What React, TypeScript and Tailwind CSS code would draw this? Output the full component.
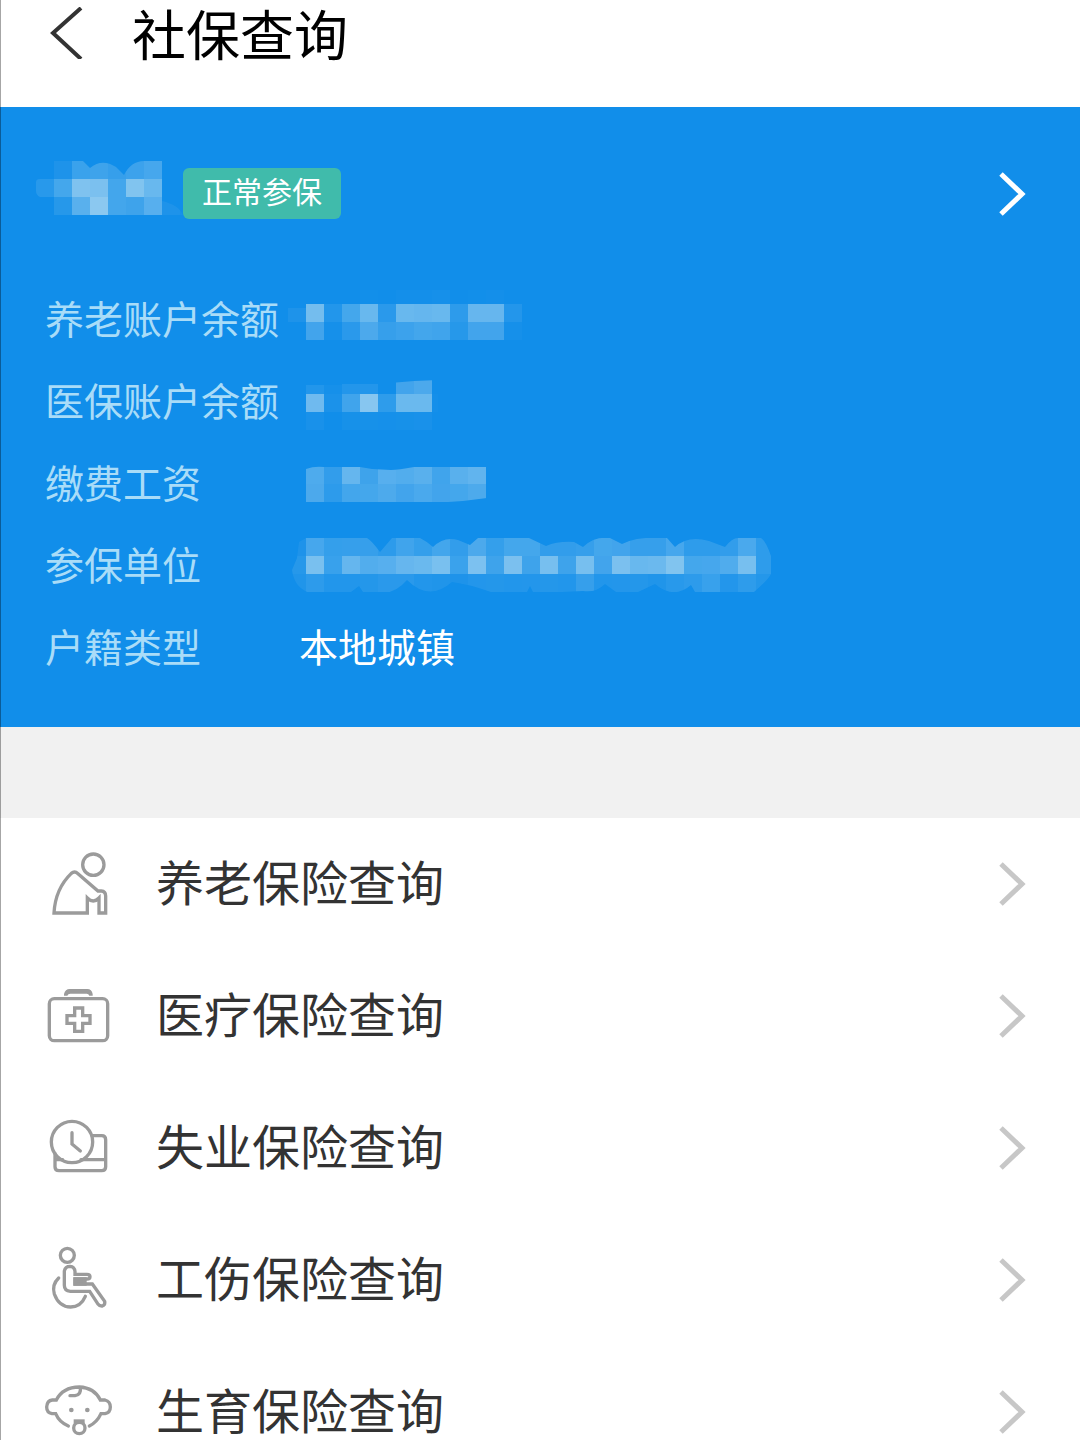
import type { ReactNode } from "react";

const CELL = 18;

type MosaicProps = {
  label: string;
  rows: number[][];
  x: number;
  y: number;
  width: number;
  height: number;
  className: string;
  outline?: string;
  id: string;
};

/* Pixelated cover for private values; each number is a cell's opacity in percent. */
function Mosaic({ label, rows, x, y, width, height, className, outline, id }: MosaicProps) {
  return (
    <svg role="img" aria-label={label} viewBox={`0 0 ${width} ${height}`} className={className} shapeRendering="crispEdges">
      {outline && (
        <clipPath id={id}>
          <path d={outline} />
        </clipPath>
      )}
      <g fill="#b9def2" clipPath={outline ? `url(#${id})` : undefined}>
        {rows.map((row, r) =>
          row.map((v, c) =>
            v > 0 ? (
              <rect key={`${r}-${c}`} x={x + c * CELL} y={y + r * CELL} width={CELL} height={CELL} opacity={v / 100} />
            ) : null,
          ),
        )}
      </g>
    </svg>
  );
}

function Chevron({ className }: { className: string }) {
  return (
    <svg viewBox="0 0 32 48" className={className} fill="none" stroke="currentColor" strokeWidth="5" aria-hidden="true">
      <path d="M3 4 L24 24 L3 44" />
    </svg>
  );
}

const fields: { label: string; value: ReactNode }[] = [
  {
    label: "养老账户余额",
    value: (
      <Mosaic
        id="pension"
        label="已隐藏"
        className="-ml-[11px] h-[82px] w-[504px]"
        width={504}
        height={82}
        x={0}
        y={8}
        outline="M18 12 H504 V82 H0 V58 Q-8 46 0 30 H18Z"
        rows={[
          [0, 0, 0, 0, 1, 0, 2, 2, 3, 0, 1, 2],
          [8, 59, 10, 31, 52, 15, 52, 50, 52, 17, 51, 51, 11],
          [0, 29, 3, 15, 35, 22, 26, 30, 28, 13, 29, 29, 3],
        ]}
      />
    ),
  },
  {
    label: "医保账户余额",
    value: (
      <Mosaic
        id="medical"
        label="已隐藏"
        className="-ml-[11px] h-[82px] w-[504px]"
        width={504}
        height={82}
        x={0}
        y={16}
        outline="M0 25 H54 V24 H90 V24 L126 21 L150 20 V82 H0Z"
        rows={[
          [0, 10, 3, 11, 11, 0, 29, 35],
          [0, 56, 6, 28, 70, 18, 53, 53, 2],
          [0, 5, 0, 4, 4, 3, 4, 5],
        ]}
      />
    ),
  },
  {
    label: "缴费工资",
    value: (
      <Mosaic
        id="wage"
        label="已隐藏"
        className="-ml-[11px] h-[82px] w-[504px]"
        width={504}
        height={82}
        x={0}
        y={24}
        outline="M18 27 Q26 24 36 25 H72 L84 27 L103 28 Q110 28 126 25 H199 V56 L175 59 L145 61 V60 H18Z"
        rows={[
          [0, 37, 20, 50, 27, 42, 39, 43, 28, 43, 48],
          [0, 35, 17, 30, 31, 36, 29, 34, 29, 31, 36],
        ]}
      />
    ),
  },
  {
    label: "参保单位",
    value: (
      <Mosaic
        id="company"
        label="已隐藏"
        className="-ml-[11px] h-[82px] w-[504px]"
        width={504}
        height={82}
        x={0}
        y={14}
        outline="M11 18 L18 14 H79 Q84 17 92 28 L104 14 H132 Q140 18 145 23 Q156 12 170 16 L182 21 L190 14 H241 L258 22 Q270 17 286 18 L295 23 Q306 12 322 14 L334 20 Q350 12 379 14 L387 23 Q400 11 421 17 L437 23 Q444 14 450 14 H473 Q478 17 483 32 V50 Q480 56 466 68 H407 L403 61 Q386 76 367 60 L350 68 H328 L317 60 Q308 69 295 67 L274 68 H245 L242 62 L239 68 H203 Q180 60 164 58 Q141 78 119 56 Q106 71 92 68 H75 L71 62 L63 68 H19 Q6 62 4 46 L9 34Z"
        rows={[
          [8, 32, 21, 22, 22, 17, 28, 21, 30, 20, 35, 21, 31, 31, 20, 20, 22, 31, 29, 22, 22, 32, 18, 18, 20, 34, 18],
          [13, 62, 24, 50, 39, 42, 51, 53, 62, 25, 64, 27, 63, 27, 61, 27, 61, 29, 63, 52, 54, 67, 31, 32, 38, 61, 18],
          [9, 17, 10, 10, 12, 15, 15, 10, 9, 8, 11, 12, 10, 11, 12, 10, 22, 10, 11, 12, 9, 14, 17, 24, 11, 18, 12],
        ]}
      />
    ),
  },
  { label: "户籍类型", value: "本地城镇" },
];

const services: { name: string; viewBox: string; icon: ReactNode }[] = [
  {
    name: "养老保险查询",
    viewBox: "36 24 216 216",
    icon: (
      <>
        <circle cx="190" cy="74" r="32" />
        <path d="M72 219 Q76 146 124 100 Q134 92 144 101 L204 153 H214 Q227 154 227 168 V219 H207 V174 Q190 192 172 174 V219Z" />
      </>
    ),
  },
  {
    name: "医疗保险查询",
    viewBox: "36 30 216 216",
    icon: (
      <>
        <rect x="58" y="86" width="175" height="126" rx="15" />
        <path d="M102 77 V72 Q106 57 119 57 H172 Q185 57 188 72 V77 H178 Q176 71 170 71 H121 Q114 71 112 77Z" fill="currentColor" stroke="none" />
        <path d="M134 114 H158 V137 H180 V160 H158 V184 H134 V160 H111 V137 H134Z" />
      </>
    ),
  },
  {
    name: "失业保险查询",
    viewBox: "36 36 216 216",
    icon: (
      <>
        <circle cx="126" cy="126" r="62" />
        <path d="M126 98 V132 L151 153" />
        <path d="M187 107 H215 Q227 107 227 119 V200 Q227 212 215 212 H87 Q75 212 75 200 V160 M75 179 H98 M153 179 H227" />
      </>
    ),
  },
  {
    name: "工伤保险查询",
    viewBox: "36 27 216 216",
    icon: (
      <>
        <circle cx="112" cy="61" r="21" />
        <path d="M103 108 Q106 94 120 94 Q134 95 135 110 V118 H171 Q180 118 180 125 Q180 132 171 132 H135 V147 H187 L224 199 Q226 210 217 213 Q209 214 203 206 L179 169 H121 Q103 168 103 151Z" />
        <path d="M135 132 H165 V147 H135Z" fill="currentColor" />
        <path d="M86 129 Q65 149 73 177 Q87 216 122 216 Q153 215 166 184" />
      </>
    ),
  },
  {
    name: "生育保险查询",
    viewBox: "36 18 216 216",
    icon: (
      <>
        <path d="M115 168 Q88 157 77 131 H66 Q50 128 50 111 Q51 92 67 90 H79 Q98 52 148 51 Q193 53 211 90 H225 Q241 94 241 111 Q241 128 225 131 H213 Q201 157 178 168" />
        <path d="M151 53 Q154 74 135 77 L120 77" />
        <circle cx="124" cy="120" r="7" fill="currentColor" stroke="none" />
        <circle cx="172" cy="120" r="7" fill="currentColor" stroke="none" />
        <circle cx="148" cy="174" r="17" />
        <path d="M131 148 H164 V160 H131Z" fill="currentColor" stroke="none" />
      </>
    ),
  },
];

export default function App() {
  return (
    <main className="relative h-screen overflow-hidden bg-white font-['Noto_Sans_CJK_SC',sans-serif]">
      <div className="pointer-events-none absolute inset-y-0 left-0 z-10 w-px bg-black/35" />

      <header className="flex items-center pb-[41px] pl-12 text-black">
        <button type="button" aria-label="返回" className="flex w-[84px] items-center text-[#333333]">
          <svg viewBox="0 0 36 52" className="h-[52px] w-9" fill="none" stroke="currentColor" strokeWidth="4" aria-hidden="true">
            <path d="M33 1 L5 26 L33 52" />
          </svg>
        </button>
        <h1 className="text-[54px] leading-[66px]">社保查询</h1>
      </header>

      <section className="bg-[#118eea] pt-[61px] pb-[39px]">
        <a href="#account" aria-label="账户详情" className="flex h-[51px] items-center pr-[50px] pl-9">
          <Mosaic
            id="name"
            label="姓名已隐藏"
            className="h-[70px] w-[147px]"
            width={147}
            height={70}
            x={0}
            y={2}
            outline="M0 23 Q0 20 4 20 H18 V2 H47 L54 9 Q66 -1 80 8 L88 16 Q95 2 108 2 H126 V42 Q143 46 147 56 H18 V38 H4 Q0 36 0 32Z"
            rows={[
              [0, 8, 25, 27, 22, 26, 32],
              [14, 31, 66, 63, 30, 67, 52],
              [0, 13, 43, 73, 30, 27, 42, 8, 5],
            ]}
          />
          <span className="flex h-[51px] items-center rounded-md bg-[#40bbab] px-[19px] pb-1.5 text-[30px] leading-[45px] text-white">
            正常参保
          </span>
          <Chevron className="ml-auto h-12 w-8 text-white" />
        </a>

        <dl className="mt-[59px] pl-[45px] text-[39px] leading-[78px]">
          {fields.map((f) => (
            <div key={f.label} className="flex h-[82px]">
              <dt className="w-[254px] shrink-0 text-[#a9dcf8]">{f.label}</dt>
              <dd className="text-white">{f.value}</dd>
            </div>
          ))}
        </dl>
      </section>

      <div className="h-[91px] bg-[#f1f1f1]" />

      <nav aria-label="保险查询">
        <ul>
          {services.map((s) => (
            <li key={s.name}>
              <a href="#service" className="flex h-[132px] items-center pr-[50px] pl-[42px]">
                <svg
                  viewBox={s.viewBox}
                  className="size-[72px] text-[#9b9b9b]"
                  fill="none"
                  stroke="currentColor"
                  strokeWidth="10"
                  strokeLinecap="round"
                  aria-hidden="true"
                >
                  {s.icon}
                </svg>
                <span className="ml-[42px] pb-2 text-[48px] leading-[72px] text-[#333333]">{s.name}</span>
                <Chevron className="ml-auto h-12 w-8 text-[#c7c7c7]" />
              </a>
            </li>
          ))}
        </ul>
      </nav>
    </main>
  );
}
